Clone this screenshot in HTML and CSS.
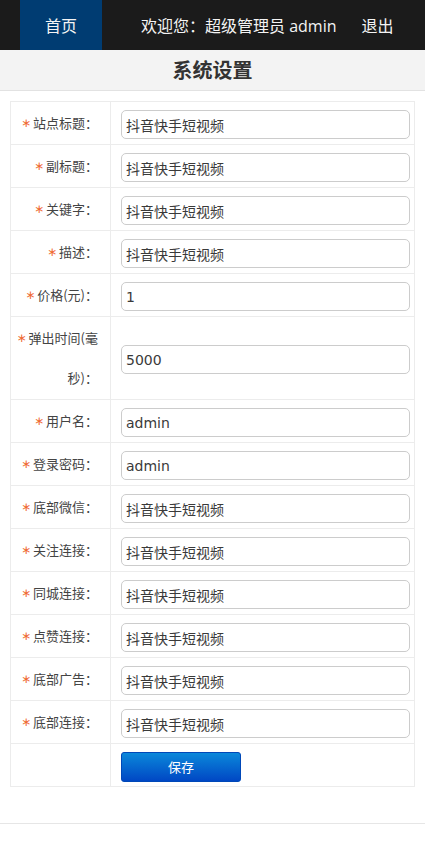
FILE: index.html
```html
<!DOCTYPE html>
<html lang="zh-CN">
<head>
<meta charset="utf-8">
<meta name="viewport" content="width=device-width, initial-scale=1">
<title>系统设置</title>
<link rel="stylesheet" href="styles.css">
</head>
<body>
<header class="topbar">
  <a class="tab" href="#">首页</a>
  <span class="welcome">欢迎您：超级管理员 admin</span>
  <a class="logout" href="#">退出</a>
</header>
<div class="titlebar">系统设置</div>
<form class="form">
<table class="settings">
  <tr><td class="label"><span class="star">∗</span>站点标题：</td><td class="field"><input class="ipt" value="抖音快手短视频"></td></tr>
  <tr><td class="label"><span class="star">∗</span>副标题：</td><td class="field"><input class="ipt" value="抖音快手短视频"></td></tr>
  <tr><td class="label"><span class="star">∗</span>关键字：</td><td class="field"><input class="ipt" value="抖音快手短视频"></td></tr>
  <tr><td class="label"><span class="star">∗</span>描述：</td><td class="field"><input class="ipt" value="抖音快手短视频"></td></tr>
  <tr><td class="label"><span class="star">∗</span>价格(元)：</td><td class="field"><input class="ipt latin" value="1"></td></tr>
  <tr><td class="label"><span class="star">∗</span>弹出时间(毫秒)：</td><td class="field"><input class="ipt latin" value="5000"></td></tr>
  <tr><td class="label"><span class="star">∗</span>用户名：</td><td class="field"><input class="ipt latin" value="admin"></td></tr>
  <tr><td class="label"><span class="star">∗</span>登录密码：</td><td class="field"><input class="ipt latin" value="admin"></td></tr>
  <tr><td class="label"><span class="star">∗</span>底部微信：</td><td class="field"><input class="ipt" value="抖音快手短视频"></td></tr>
  <tr><td class="label"><span class="star">∗</span>关注连接：</td><td class="field"><input class="ipt" value="抖音快手短视频"></td></tr>
  <tr><td class="label"><span class="star">∗</span>同城连接：</td><td class="field"><input class="ipt" value="抖音快手短视频"></td></tr>
  <tr><td class="label"><span class="star">∗</span>点赞连接：</td><td class="field"><input class="ipt" value="抖音快手短视频"></td></tr>
  <tr><td class="label"><span class="star">∗</span>底部广告：</td><td class="field"><input class="ipt" value="抖音快手短视频"></td></tr>
  <tr><td class="label"><span class="star">∗</span>底部连接：</td><td class="field"><input class="ipt" value="抖音快手短视频"></td></tr>
  <tr><td class="label">&nbsp;</td><td class="field"><button class="btn" type="button">保存</button></td></tr>
</table>
</form>
<div class="footer"></div>
</body>
</html>
```

FILE: styles.css
```css
* { box-sizing: border-box; }
html, body { margin: 0; padding: 0; background: #fff; }
body {
  font-family: "Open Sans", "Noto Sans CJK SC", sans-serif;
  color: #333;
}
.topbar {
  height: 50px;
  background: #1b1b1b;
  display: flex;
  align-items: stretch;
  padding-left: 20px;
  font-size: 16px;
  color: #f4f4f4;
}
.tab {
  width: 82px;
  background: #003c72;
  color: #f4f4f4;
  text-decoration: none;
  display: flex;
  align-items: center;
  justify-content: center;
}
.welcome {
  margin-left: 39px;
  display: flex;
  align-items: center;
}
.logout {
  margin-left: 25px;
  color: #f4f4f4;
  text-decoration: none;
  display: flex;
  align-items: center;
}
.titlebar {
  height: 41px;
  background: #f3f3f3;
  border-bottom: 1px solid #e2e2e2;
  text-align: center;
  font-size: 20px;
  font-weight: bold;
  line-height: 40px;
  color: #333;
  font-family: "Noto Sans CJK SC", sans-serif;
}
.form { margin: 10px 10px 0; }
.settings {
  width: 405px;
  border-collapse: collapse;
  border: 1px solid #ececec;
}
.settings td {
  border: 1px solid #ececec;
}
.label {
  width: 101px;
  text-align: right;
  font-size: 13px;
  line-height: 40px;
  padding: 1px 12px 1px 2px;
  color: #444;
  font-family: "Noto Sans CJK SC", sans-serif;
  vertical-align: middle;
}
.star {
  color: #ef6a33;
  font-size: 12px;
  margin-right: 2px;
  font-family: "DejaVu Sans", sans-serif;
  line-height: 40px;
  vertical-align: top;
}
.field {
  padding: 3px 4px 0 10px;
  vertical-align: middle;
}
.ipt {
  display: block;
  width: 289px;
  height: 29px;
  border: 1px solid #cccccc;
  border-radius: 5px;
  padding: 0 4px;
  font-size: 14px;
  color: #3a3a3a;
  background: #fff;
  font-family: "Noto Sans CJK SC", sans-serif;
  outline: none;
}
.ipt.latin { font-family: "DejaVu Sans", sans-serif; }
.btn {
  display: block;
  width: 120px;
  height: 30px;
  border: 1px solid #0048b8;
  border-radius: 3px;
  background: linear-gradient(#0b88da, #0047c4);
  color: #fff;
  font-size: 13px;
  font-family: "Noto Sans CJK SC", sans-serif;
  padding: 0;
  cursor: pointer;
}
.footer {
  margin-top: 36px;
  height: 22px;
  border-top: 1px solid #e6e6e6;
}
```
